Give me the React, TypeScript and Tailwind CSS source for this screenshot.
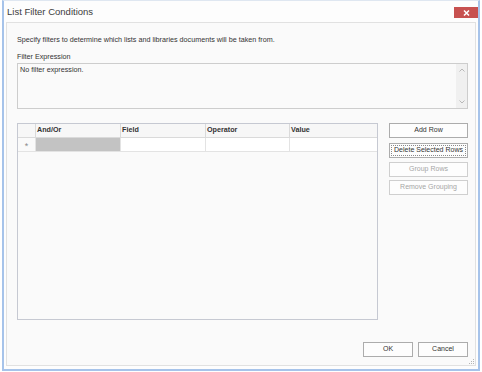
import React from 'react';

const font = "font-['Liberation_Sans',Arial,sans-serif]";

function DialogButton({ label, disabled, focused, className = '' }: { label: string; disabled?: boolean; focused?: boolean; className?: string }) {
  return (
    <div
      className={`relative h-[15px] flex items-center justify-center border bg-[#fdfdfd] text-[7px] whitespace-nowrap ${
        disabled ? 'border-[#cfcfcf] text-[#a6a6a6]' : 'border-[#acacac] text-[#333]'
      } ${className}`}
    >
      {focused && <div className="absolute inset-[1px] border border-dotted border-[#8a8a8a]" />}
      {label}
    </div>
  );
}

export default function App() {
  return (
    <div className={`w-[482px] h-[372px] bg-white overflow-hidden pl-[2px] ${font}`}>
      <div className="w-[478px] h-[371px] border-t border-t-[#dfe7f1] border-x-2 border-b-2 border-[#a6c3ea] bg-[#fdfdfd] flex flex-col">
        {/* Title bar */}
        <div className="h-[21px] flex items-center justify-between pl-[3px] relative">
          <span className="text-[9.5px] text-[#3c3c3c] mt-[1px]">List Filter Conditions</span>
          <div className="absolute right-0 top-[6px] w-[24px] h-[11px] bg-[#c75150] flex items-center justify-center">
            <svg width="7" height="6" viewBox="0 0 7 6">
              <path d="M1 0.5 L6 5.5 M6 0.5 L1 5.5" stroke="white" strokeWidth="1.5" />
            </svg>
          </div>
        </div>

        {/* Content panel */}
        <div className="mx-[2px] h-[344px] border border-[#e1e1e1] bg-[#fafafa] flex flex-col pl-[10px] pr-[7px] relative">
          <div className="mt-[12px] text-[7.2px] text-[#333] leading-[10px]">
            Specify filters to determine which lists and libraries documents will be taken from.
          </div>
          <div className="mt-[7px] text-[7.2px] text-[#333] leading-[10px]">Filter Expression</div>

          {/* Expression box */}
          <div className="mt-[1px] w-[451px] h-[46px] border border-[#cdcdcd] bg-[#fafafa] flex">
            <div className="flex-1 pl-[2px] pt-[1px] text-[7.2px] text-[#333] leading-[10px]">No filter expression.</div>
            <div className="w-[11px] bg-[#f0f0f0] flex flex-col items-center justify-between py-[4px]">
              <svg width="6" height="4" viewBox="0 0 6 4">
                <path d="M0.5 3.5 L3 1 L5.5 3.5" stroke="#b8b8b8" fill="none" />
              </svg>
              <svg width="6" height="4" viewBox="0 0 6 4">
                <path d="M0.5 0.5 L3 3 L5.5 0.5" stroke="#b8b8b8" fill="none" />
              </svg>
            </div>
          </div>

          {/* Grid + side buttons */}
          <div className="mt-[14px] flex gap-[11px]">
            <div className="w-[361px] h-[197px] border border-[#c6c9d2] bg-[#fafafa] flex flex-col">
              <div className="flex h-[14px] bg-[#f7f7f7] border-b border-[#dadada] text-[7.2px] font-bold text-[#333]">
                <div className="w-[18px] border-r border-[#dadada]" />
                <div className="w-[85px] border-r border-[#dadada] pl-[1px] flex items-center">And/Or</div>
                <div className="w-[85px] border-r border-[#dadada] pl-[1px] flex items-center">Field</div>
                <div className="w-[84px] border-r border-[#dadada] pl-[1px] flex items-center">Operator</div>
                <div className="flex-1 pl-[1px] flex items-center">Value</div>
              </div>
              <div className="flex h-[14px] border-b border-[#e3e3e3] bg-white">
                <div className="w-[18px] border-r border-[#e3e3e3] flex items-center justify-center bg-[#fafafa]">
                  <span className="text-[9px] text-[#8c8c8c] leading-none mt-[3px]">*</span>
                </div>
                <div className="w-[85px] border-r border-[#e3e3e3] bg-[#c3c3c3] bg-[radial-gradient(#b5b5b5_0.5px,transparent_0.6px)] bg-[length:2px_2px]" />
                <div className="w-[85px] border-r border-[#e3e3e3]" />
                <div className="w-[84px] border-r border-[#e3e3e3]" />
                <div className="flex-1" />
              </div>
            </div>

            <div className="w-[79px] flex flex-col gap-[3px]">
              <DialogButton label="Add Row" />
              <DialogButton label="Delete Selected Rows" focused className="mt-[2px]" />
              <DialogButton label="Group Rows" disabled className="mt-[1px]" />
              <DialogButton label="Remove Grouping" disabled />
            </div>
          </div>

          {/* Footer buttons */}
          <div className="mt-[22px] flex justify-end gap-[5px]">
            <DialogButton label="OK" className="w-[50px]" />
            <DialogButton label="Cancel" className="w-[50px]" />
          </div>

          {/* Size grip */}
          <svg className="absolute right-0 bottom-0" width="7" height="7" viewBox="0 0 7 7">
            <rect x="5" y="1" width="1" height="1" fill="#b5b5b5" />
            <rect x="3" y="3" width="1" height="1" fill="#b5b5b5" />
            <rect x="5" y="3" width="1" height="1" fill="#b5b5b5" />
            <rect x="1" y="5" width="1" height="1" fill="#b5b5b5" />
            <rect x="3" y="5" width="1" height="1" fill="#b5b5b5" />
            <rect x="5" y="5" width="1" height="1" fill="#b5b5b5" />
          </svg>
        </div>
      </div>
    </div>
  );
}
